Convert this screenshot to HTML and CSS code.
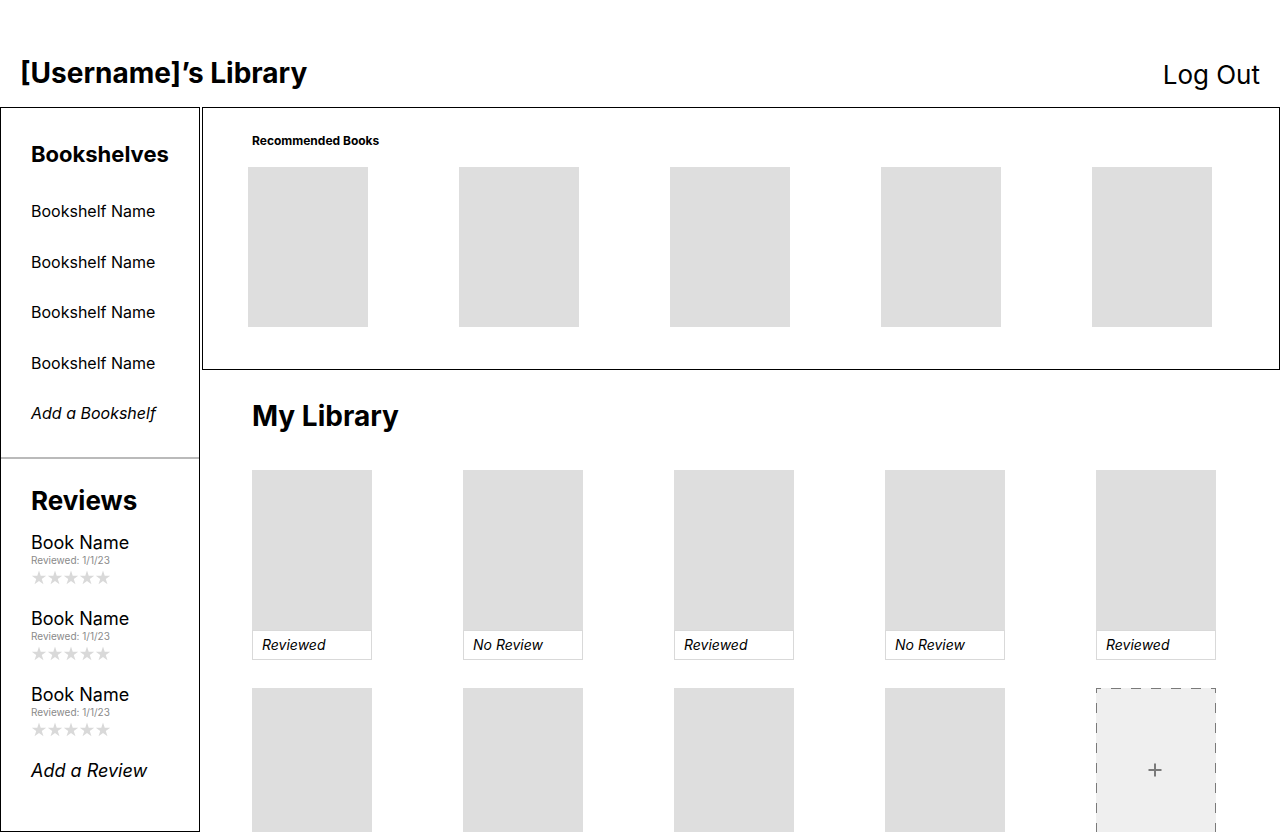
FILE: index.html
```html
<!DOCTYPE html>
<html lang="en">
<head>
<meta charset="utf-8">
<meta name="viewport" content="width=device-width, initial-scale=1">
<title>Library</title>
<link rel="stylesheet" href="styles.css">
</head>
<body>
<svg class="defs" width="0" height="0" aria-hidden="true">
  <defs>
    <path id="star" d="M0-7.6 1.7-2.35H7.23L2.76.9 4.47 6.15 0 2.9-4.47 6.15-2.76.9-7.23-2.35H-1.7Z"/>
    <g id="stars">
      <use href="#star" x="8" y="8"/><use href="#star" x="24" y="8"/><use href="#star" x="40" y="8"/><use href="#star" x="56" y="8"/><use href="#star" x="72" y="8"/>
    </g>
  </defs>
</svg>
<div class="page">
  <header class="header">
    <h1 class="title">[Username]’s Library</h1>
    <button class="logout" type="button">Log Out</button>
  </header>
  <div class="content">
    <aside class="sidebar">
      <nav class="shelves">
        <h2 class="shelves-title">Bookshelves</h2>
        <div class="shelf-list">
          <a class="shelf" href="#">Bookshelf Name</a>
          <a class="shelf" href="#">Bookshelf Name</a>
          <a class="shelf" href="#">Bookshelf Name</a>
          <a class="shelf" href="#">Bookshelf Name</a>
          <button class="shelf add" type="button">Add a Bookshelf</button>
        </div>
      </nav>
      <section class="reviews">
        <h2 class="reviews-title">Reviews</h2>
        <article class="review">
          <h3 class="book-name">Book Name</h3>
          <p class="date">Reviewed: 1/1/23</p>
          <svg class="stars" viewBox="0 0 80 16" role="img" aria-label="Rating"><use href="#stars"/></svg>
        </article>
        <article class="review">
          <h3 class="book-name">Book Name</h3>
          <p class="date">Reviewed: 1/1/23</p>
          <svg class="stars" viewBox="0 0 80 16" role="img" aria-label="Rating"><use href="#stars"/></svg>
        </article>
        <article class="review">
          <h3 class="book-name">Book Name</h3>
          <p class="date">Reviewed: 1/1/23</p>
          <svg class="stars" viewBox="0 0 80 16" role="img" aria-label="Rating"><use href="#stars"/></svg>
        </article>
        <button class="book-name add" type="button">Add a Review</button>
      </section>
    </aside>
    <main class="main">
      <section class="recommended">
        <h2 class="recommended-title">Recommended Books</h2>
        <div class="row">
          <div class="cover"></div>
          <div class="cover"></div>
          <div class="cover"></div>
          <div class="cover"></div>
          <div class="cover"></div>
        </div>
      </section>
      <section class="library">
        <h2 class="title">My Library</h2>
        <div class="row">
          <article class="book"><div class="cover"></div><p class="status">Reviewed</p></article>
          <article class="book"><div class="cover"></div><p class="status">No Review</p></article>
          <article class="book"><div class="cover"></div><p class="status">Reviewed</p></article>
          <article class="book"><div class="cover"></div><p class="status">No Review</p></article>
          <article class="book"><div class="cover"></div><p class="status">Reviewed</p></article>
        </div>
        <div class="row">
          <div class="cover"></div>
          <div class="cover"></div>
          <div class="cover"></div>
          <div class="cover"></div>
          <button class="add-book" type="button" aria-label="Add a book">
            <svg viewBox="0 0 120 160" aria-hidden="true">
              <path class="dashes" d="M0 .5H120M0 159.5H120M.5 0V160M119.5 0V160"/>
              <path class="plus" d="M52.5 82H65.5M59 75.5V88.5"/>
            </svg>
          </button>
        </div>
      </section>
    </main>
  </div>
</div>
</body>
</html>
```
FILE: styles.css
```css
* {
  box-sizing: border-box;
}

body,
h1,
h2,
h3,
p {
  margin: 0;
}

body {
  font-family: Inter, "Liberation Sans", sans-serif;
  color: #000;
  background: #fff;
}

button {
  padding: 0;
  border: 0;
  background: none;
  color: inherit;
  font-family: inherit;
  text-align: left;
  cursor: pointer;
}

.defs {
  position: absolute;
}

.page {
  display: flex;
  flex-direction: column;
  height: 100vh;
}

.header {
  display: flex;
  justify-content: space-between;
  align-items: flex-start;
  padding: 56px 20px 13px;
}

.title {
  font-size: 28px;
  line-height: 34px;
  font-weight: 700;
}

.logout {
  font-size: 26px;
  line-height: 38px;
}

.content {
  display: grid;
  grid-template-columns: 200px minmax(0, 1fr);
  gap: 2px;
  flex: 1;
  min-height: 0;
}

.sidebar {
  border: 1px solid #000;
  overflow: hidden;
}

.shelves {
  padding: 31px 30px 34px;
  border-bottom: 2px solid #bababa;
}

.shelves-title {
  margin-bottom: 32px;
  font-size: 22px;
  line-height: 30px;
}

.shelf-list {
  display: flex;
  flex-direction: column;
  align-items: flex-start;
  justify-content: space-between;
  min-height: 222px;
}

.shelf {
  font-size: 16px;
  line-height: 20px;
  color: inherit;
  text-decoration: none;
}

.add {
  font-style: italic;
}

.reviews {
  display: flex;
  flex-direction: column;
  align-items: flex-start;
  gap: 23px;
  padding: 26px 30px;
}

.reviews-title {
  margin-bottom: -7px;
  font-size: 26px;
  line-height: 32px;
}

.book-name {
  font-size: 18px;
  line-height: 20px;
  font-weight: 400;
}

.date {
  font-size: 10px;
  line-height: 14px;
  color: #8a8a8a;
}

.stars {
  display: block;
  width: 80px;
  height: 16px;
  margin-top: 3px;
  fill: #d9d9d9;
}

.main {
  display: flex;
  flex-direction: column;
  min-height: 0;
}

.recommended {
  padding: 25px 67px 42px 45px;
  border: 1px solid #000;
}

.recommended-title {
  margin: 0 0 18px 4px;
  font-size: 12px;
  line-height: 16px;
}

.row {
  display: flex;
  justify-content: space-between;
}

.cover {
  width: 120px;
  height: 160px;
  background: #dedede;
}

.library {
  flex: 1;
  min-height: 0;
  padding: 29px 64px 0 50px;
  overflow: hidden;
}

.library .title {
  margin-bottom: 37px;
}

.library .row {
  margin-bottom: 28px;
}

.status {
  padding: 4px 9px;
  border: 1px solid #d9d9d9;
  font-size: 14px;
  line-height: 20px;
  font-style: italic;
}

.add-book {
  width: 120px;
  height: 160px;
  background: #efefef;
}

.add-book svg {
  display: block;
  fill: none;
  stroke: #7a7a7a;
}

.dashes {
  stroke-dasharray: 10;
  stroke-dashoffset: 5;
}

.plus {
  stroke-width: 2;
}
```
